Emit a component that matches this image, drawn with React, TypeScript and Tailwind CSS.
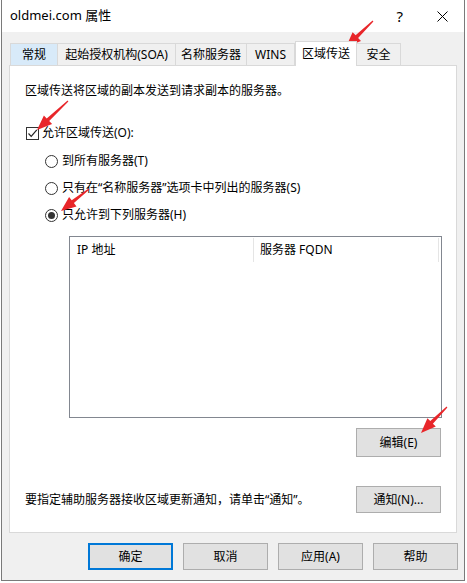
import React from "react";

const font = { fontFamily: '"Noto Sans", "Noto Sans CJK SC", sans-serif' };

// red annotation arrow, tail -> tip
function arrowPoints(x1: number, y1: number, x2: number, y2: number) {
  const dx = x2 - x1;
  const dy = y2 - y1;
  const len = Math.sqrt(dx * dx + dy * dy);
  const ux = dx / len;
  const uy = dy / len;
  const nx = -uy;
  const ny = ux;
  const headLen = 15;
  const headW = 6;
  const bx = x2 - ux * headLen;
  const by = y2 - uy * headLen;
  const pts = [
    [x1 + nx * 0.6, y1 + ny * 0.6],
    [bx + nx * 1.8, by + ny * 1.8],
    [bx + nx * headW, by + ny * headW],
    [x2, y2],
    [bx - nx * headW, by - ny * headW],
    [bx - nx * 1.8, by - ny * 1.8],
    [x1 - nx * 0.6, y1 - ny * 0.6],
  ];
  return pts.map((p) => p[0].toFixed(1) + "," + p[1].toFixed(1)).join(" ");
}

const arrows = [
  [373, 21, 346, 47],
  [68, 101, 37, 130],
  [89, 189, 61, 211],
  [447, 407, 421, 433],
];

const tabs = [
  { label: "常规", w: 48 },
  { label: "起始授权机构(SOA)", w: 118 },
  { label: "名称服务器", w: 71 },
  { label: "WINS", w: 48 },
  { label: "区域传送", w: 62, active: true },
  { label: "安全", w: 44 },
];

const Radio: React.FC<{ checked?: boolean }> = ({ checked }) => (
  <div className="w-[13px] h-[13px] rounded-full border border-[#333333] bg-white flex items-center justify-center shrink-0">
    {checked && <div className="w-[7px] h-[7px] rounded-full bg-[#333333]" />}
  </div>
);

const Btn: React.FC<{ label: string; primary?: boolean; className?: string }> = ({ label, primary, className }) => (
  <div
    className={
      "h-[27px] w-[85px] bg-[#e1e1e1] flex items-center justify-center text-[12px] text-black " +
      (primary ? "border-2 border-[#0078d7]" : "border border-[#adadad]") +
      " " +
      (className || "")
    }
  >
    {label}
  </div>
);

export default function App() {
  return (
    <div className="relative w-[467px] h-[583px] bg-white overflow-hidden pl-[1px]" style={font}>
      <div className="w-[464px] h-[581px] border-l border-r border-b border-[#7a7a7a] flex flex-col">
        {/* title bar */}
        <div className="h-[32px] bg-white flex items-center pl-[8px] text-[13px] text-black">
          <span>oldmei.com 属性</span>
          <span className="ml-auto text-[15px] mr-[34px]">?</span>
          <svg width="11" height="11" viewBox="0 0 11 11" className="mr-[16px]">
            <path d="M0.5 0.5 L10.5 10.5 M10.5 0.5 L0.5 10.5" stroke="#000" strokeWidth="1" />
          </svg>
        </div>

        {/* body */}
        <div className="flex-1 bg-[#f0f0f0] flex flex-col">
          {/* tabs */}
          <div className="flex items-end h-[33px] pl-[8px]">
            {tabs.map((t, i) =>
              t.active ? (
                <div
                  key={i}
                  className="h-[25px] bg-white border-t border-l border-r border-[#d9d9d9] flex items-center justify-center text-[12px] -mb-[1px] relative z-10"
                  style={{ width: t.w }}
                >
                  {t.label}
                </div>
              ) : (
                <div
                  key={i}
                  className={
                    "h-[22px] border-t border-r border-[#d9d9d9] flex items-center justify-center text-[12px] " +
                    (i === 0 ? "bg-[#d8eaf9] border-l" : "bg-[#f0f0f0]")
                  }
                  style={{ width: t.w }}
                >
                  {t.label}
                </div>
              )
            )}
          </div>

          {/* panel */}
          <div className="ml-[7px] w-[448px] h-[468px] bg-white border border-[#d9d9d9] flex flex-col text-[12px] text-black">
            <div className="pl-[15px] pt-[17px] h-[16px] leading-[16px] box-content">
              区域传送将区域的副本发送到请求副本的服务器。
            </div>

            <div className="flex items-center pl-[16px] mt-[26px] h-[16px]">
              <div className="w-[13px] h-[13px] border border-[#333333] bg-white flex items-center justify-center">
                <svg width="11" height="11" viewBox="0 0 11 11">
                  <path d="M1.5 5.5 L4.2 8.3 L9.8 1.8" stroke="#222" strokeWidth="1.2" fill="none" />
                </svg>
              </div>
              <span className="ml-[3px]">允许区域传送(O):</span>
            </div>

            <div className="flex flex-col pl-[35px] mt-[12px] gap-[11px]">
              <div className="flex items-center h-[16px]">
                <Radio />
                <span className="ml-[4px]">到所有服务器(T)</span>
              </div>
              <div className="flex items-center h-[16px]">
                <Radio />
                <span className="ml-[4px]">只有在“名称服务器”选项卡中列出的服务器(S)</span>
              </div>
              <div className="flex items-center h-[16px]">
                <Radio checked />
                <span className="ml-[4px]">只允许到下列服务器(H)</span>
              </div>
            </div>

            {/* list */}
            <div className="ml-[59px] mt-[13px] w-[373px] h-[182px] border border-[#828790] bg-white flex items-start">
              <div className="w-[184px] h-[24px] border-r border-[#e5e5e5] flex items-center pl-[7px] mt-[1px]">
                IP 地址
              </div>
              <div className="w-[185px] h-[24px] border-r border-[#e5e5e5] flex items-center pl-[6px] mt-[1px]">
                服务器 FQDN
              </div>
            </div>

            <div className="flex justify-end pr-[15px] mt-[10px]">
              <Btn label="编辑(E)" className="h-[29px] w-[84px]" />
            </div>

            <div className="flex items-center pl-[15px] pr-[15px] mt-[29px]">
              <span>要指定辅助服务器接收区域更新通知，请单击“通知”。</span>
              <Btn label="通知(N)..." className="ml-auto w-[84px]" />
            </div>
          </div>

          {/* bottom buttons */}
          <div className="flex justify-end gap-[10px] pr-[6px] mt-[10px]">
            <Btn label="确定" primary />
            <Btn label="取消" />
            <Btn label="应用(A)" />
            <Btn label="帮助" />
          </div>
        </div>
      </div>

      {/* annotation arrows */}
      <svg className="absolute left-0 top-0 pointer-events-none" width="467" height="583">
        {arrows.map((a, i) => (
          <polygon key={i} points={arrowPoints(a[0], a[1], a[2], a[3])} fill="#e8262a" />
        ))}
      </svg>
    </div>
  );
}
